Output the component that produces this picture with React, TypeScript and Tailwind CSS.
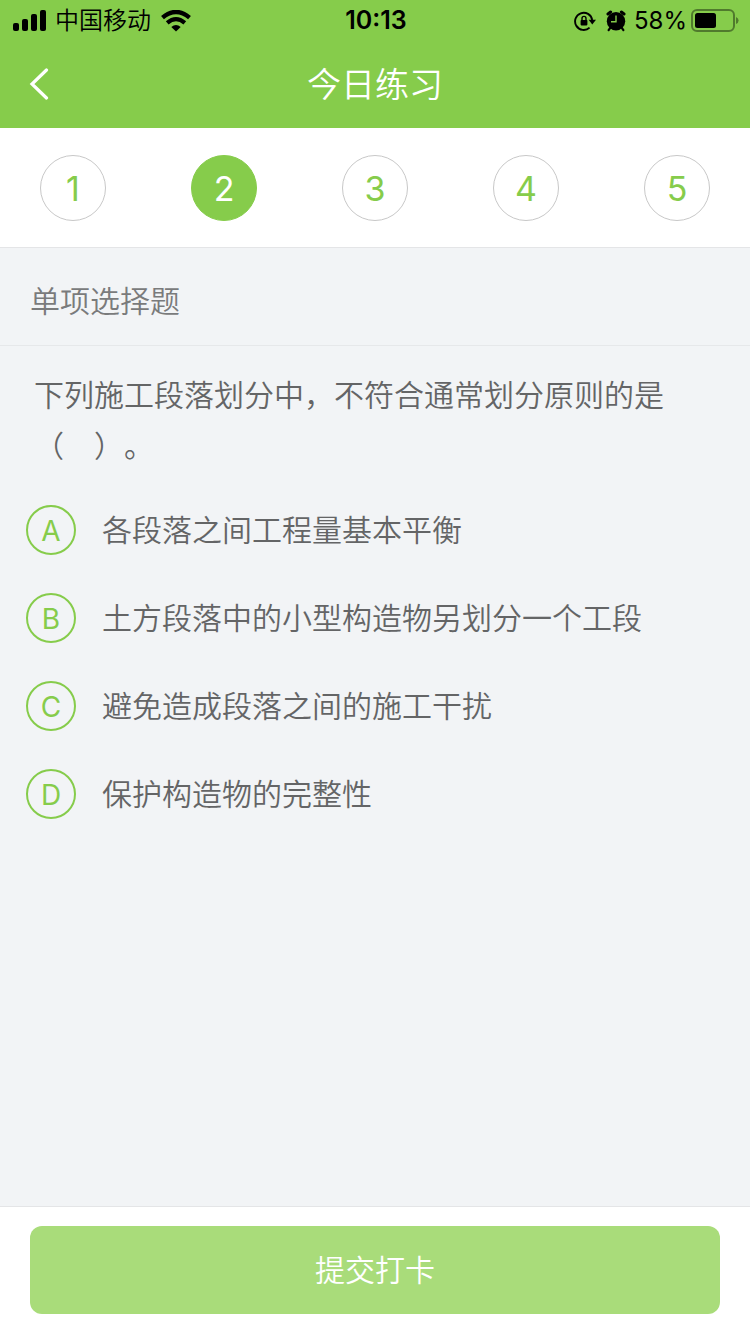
import { useState } from 'react'
import clsx from 'clsx'

type Option = {
  key: string
  text: string
}

const QUESTION_COUNT = 5

const options: Option[] = [
  { key: 'A', text: '各段落之间工程量基本平衡' },
  { key: 'B', text: '土方段落中的小型构造物另划分一个工段' },
  { key: 'C', text: '避免造成段落之间的施工干扰' },
  { key: 'D', text: '保护构造物的完整性' },
]

function SignalIcon() {
  return (
    <svg width="34" height="22" viewBox="0 0 34 22" aria-hidden="true">
      <rect x="0" y="13" width="6" height="8" rx="2" />
      <rect x="9" y="9" width="6" height="12" rx="2" />
      <rect x="18" y="4" width="6" height="17" rx="2" />
      <rect x="27" y="0" width="6" height="21" rx="2" />
    </svg>
  )
}

function WifiIcon() {
  return (
    <svg width="30" height="22" viewBox="0 0 30 22" fill="none" stroke="#000" aria-hidden="true">
      <path d="M1.5 7.6 Q15 -3.6 28.5 7.6" strokeWidth="4.4" />
      <path d="M6.2 12.9 Q15 5.4 23.8 12.9" strokeWidth="4.2" />
      <path d="M10.3 17 Q15 13.2 19.7 17 L15 21.6 Z" fill="#000" stroke="none" />
    </svg>
  )
}

function RotationLockIcon() {
  return (
    <svg width="22" height="20" viewBox="0 0 22 20" fill="none" stroke="#000" aria-hidden="true">
      <path d="M15.6 16.6 A8.6 8.6 0 1 1 18.2 9" strokeWidth="1.9" />
      <path d="M14.6 8.8 H22 L18.3 13.6 Z" fill="#000" stroke="none" />
      <rect x="6.6" y="9" width="6.8" height="5.4" rx="0.8" fill="#000" stroke="none" />
      <path d="M8 9.4 V7.4 A2 2 0 0 1 12 7.4 V9.4" strokeWidth="1.4" />
    </svg>
  )
}

function AlarmIcon() {
  return (
    <svg width="20" height="22" viewBox="0 0 20 22" aria-hidden="true">
      <circle cx="10" cy="11.2" r="9.2" />
      <path
        d="M2 4 L4.6 2 M15.4 2 L18 4"
        fill="none"
        stroke="#000"
        strokeWidth="3"
        strokeLinecap="round"
      />
      <path d="M4.4 17.6 L2.6 20.2 M15.6 17.6 L17.4 20.2" stroke="#000" strokeWidth="2.2" strokeLinecap="round" />
      <path d="M10 5.4 V11.8 H5" fill="none" stroke="#86cc4b" strokeWidth="1.4" />
    </svg>
  )
}

function BatteryIcon() {
  return (
    <svg width="48" height="24" viewBox="0 0 48 24" aria-hidden="true">
      <rect x="1" y="1" width="42" height="21" rx="5" fill="none" stroke="#000" strokeOpacity="0.4" strokeWidth="2" />
      <rect x="4" y="4" width="21" height="15" rx="2.5" />
      <path d="M45 8 Q47.6 9 47.6 11.5 Q47.6 14 45 15 Z" fillOpacity="0.4" />
    </svg>
  )
}

function StatusBar() {
  return (
    <div className="grid h-10 grid-cols-[1fr_auto_1fr] items-center pl-[13px] pr-[11px] pt-0.5 text-2xl text-black">
      <div className="flex items-center">
        <SignalIcon />
        <span className="ml-2 mr-2.5">中国移动</span>
        <WifiIcon />
      </div>
      <span className="text-[25px] font-semibold">10:13</span>
      <div className="flex items-center justify-end">
        <RotationLockIcon />
        <span className="ml-2.5 mr-2">
          <AlarmIcon />
        </span>
        <span className="mr-1 font-normal">58%</span>
        <BatteryIcon />
      </div>
    </div>
  )
}

export default function App() {
  const [current, setCurrent] = useState(2)
  const [answer, setAnswer] = useState<string | null>(null)

  return (
    <div className="flex min-h-screen flex-col bg-[#f2f4f6] font-['Inter','Noto_Sans_CJK_SC',sans-serif] font-[350] text-[#646566]">
      <header className="bg-[#86cc4b]">
        <StatusBar />
        <div className="grid h-[88px] grid-cols-[1fr_auto_1fr] items-center px-7">
          <button type="button" aria-label="返回" className="w-fit">
            <svg width="22" height="32" viewBox="0 0 22 32" fill="none" stroke="#fff" strokeWidth="3.2">
              <path d="M18.5 2 L4 16 L18.5 30" strokeLinecap="round" />
            </svg>
          </button>
          <h1 className="text-[34px] font-[350] text-white">今日练习</h1>
        </div>
      </header>

      <nav aria-label="题号" className="flex h-[120px] items-center justify-between border-b border-[#e4e5e7] bg-white px-10">
        {Array.from({ length: QUESTION_COUNT }, (_, i) => i + 1).map((n) => (
          <button
            key={n}
            type="button"
            onClick={() => setCurrent(n)}
            aria-current={n === current ? 'step' : undefined}
            className={clsx(
              'flex size-[66px] items-center justify-center rounded-full border pt-0.5 text-[34px] font-normal',
              n === current
                ? 'border-[#86cc4b] bg-[#86cc4b] text-white'
                : 'border-[#c8c8c8] bg-white text-[#86cc4b]'
            )}
          >
            {n}
          </button>
        ))}
      </nav>

      <main className="flex-1">
        <h2 className="flex h-[98px] items-center border-b border-[#e6e8ea] px-[30px] pt-2.5 text-[30px] font-[350] text-[#7a7b7c]">
          单项选择题
        </h2>

        <fieldset aria-labelledby="question" className="pt-6">
          <p id="question" className="px-[34px] text-[30px] leading-[51px] [text-spacing-trim:space-all]">
            下列施工段落划分中，不符合通常划分原则的是（&#x3000;）。
          </p>
          <div className="mt-[33px] flex flex-col gap-[38px] px-[26px]">
            {options.map((o) => (
              <label key={o.key} className="flex cursor-pointer items-center gap-[26px]">
                <input
                  type="radio"
                  name="answer"
                  value={o.key}
                  checked={answer === o.key}
                  onChange={() => setAnswer(o.key)}
                  className="peer sr-only"
                />
                <span className="flex size-[50px] shrink-0 items-center justify-center rounded-full border-2 border-[#86cc4b] pt-0.5 text-[28px] font-normal text-[#86cc4b] peer-checked:bg-[#86cc4b] peer-checked:text-white">
                  {o.key}
                </span>
                <span className="text-[30px] leading-[50px]">{o.text}</span>
              </label>
            ))}
          </div>
        </fieldset>
      </main>

      <footer className="border-t border-[#e4e5e7] bg-white px-[30px] pb-5 pt-[19px]">
        <button type="button" className="h-[88px] w-full rounded-xl bg-[#a9dc7a] text-[30px] font-[350] text-white">
          提交打卡
        </button>
      </footer>
    </div>
  )
}
